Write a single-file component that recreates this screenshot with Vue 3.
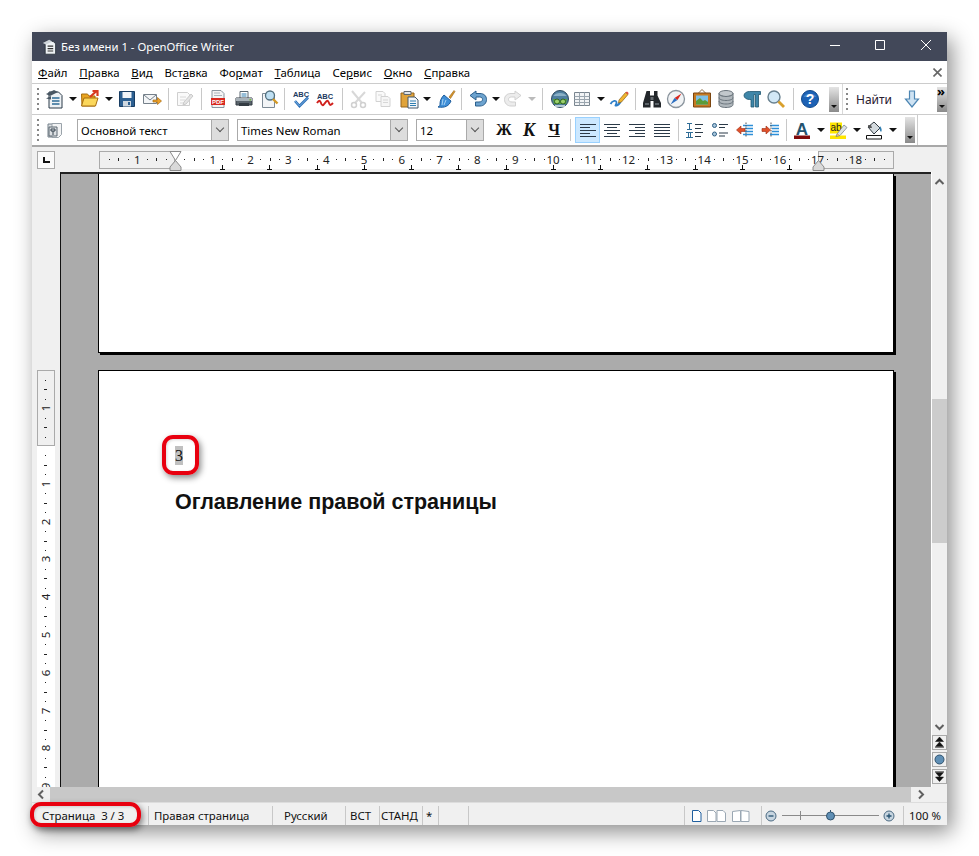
<script setup>
// toolbar items: [icon, left edge in window coordinates]
const icons = {
  doc: '<path d="M4 3h9.500l3.500 3.500V19H4z" fill="#eef2f5" stroke="#2b3a48"/><path d="M7 9h7.500M7 12h7.500M7 15h7.500" stroke="#2e6c96" stroke-width="1.500"/><path d="M1 5l8-4 4 2-8 4z" fill="#4a5763"/><path d="M1 9.500l5-2.500v3.500z" fill="#4a5763"/>',
  folder: '<path d="M1.500 5h6l1.500 2h6v10h-13z" fill="#e9a520" stroke="#a86f10"/><path d="M1.500 17l2.500-8h14l-2.500 8z" fill="#fbd75b" stroke="#a86f10"/><path d="M10 8l6-5.500M12.500 2h5v5" fill="none" stroke="#d8391f" stroke-width="2.200"/>',
  save: '<path d="M2.500 2.500h15v15h-15z" fill="#2c5f91" stroke="#183d63"/><path d="M5.500 3h9v6h-9z" fill="#f0f4f8"/><path d="M6 12h8v5.500H6z" fill="#cfd8e0"/><path d="M11 13h2v3h-2z" fill="#2c5f91"/>',
  mail: '<path d="M1.500 5.500h13v9h-13z" fill="#f3f5f7" stroke="#75808a"/><path d="M2 6l6 5 6-5" fill="none" stroke="#75808a"/><path d="M11 11h4.500V8.500l4 3.500-4 3.500V13H11z" fill="#eda12b" stroke="#a66a10" stroke-width=".7"/>',
  edit: '<path d="M3.500 3.500h10l2 2v11h-12z" fill="#fafafa" stroke="#cfcfcf"/><path d="M6 8h6M6 11h5M6 14h4" stroke="#d8d8d8"/><path d="M10 13l7-8 2 2-7 8-3 1z" fill="#e4e4e4" stroke="#cacaca"/>',
  pdf: '<path d="M4 1.500h9l3 3v14H4z" fill="#f4f4f4" stroke="#8a96a0"/><path d="M6 4h6M6 6.500h8" stroke="#aab3bb"/><path d="M3 9h14v7H3z" fill="#d8281f"/><text x="10" y="15" font-family="Liberation Sans" font-size="6" font-weight="700" fill="#fff" text-anchor="middle">PDF</text>',
  print: '<path d="M6 2.500h8v7H6z" fill="#fff" stroke="#5b6670"/><path d="M7.500 5h5M7.500 7h5" stroke="#2e7db0"/><path d="M2 9h16v7H2z" fill="#59636b" stroke="#333b42"/><path d="M2 9h16v3H2z" fill="#a9b2b9"/><path d="M5 14h10v3H5z" fill="#333b42"/><path d="M15.500 10h1.500v1.500h-1.500z" fill="#6fc030"/>',
  preview: '<path d="M3.500 4.500h9l3 3v11h-12z" fill="#f3f5f7" stroke="#7d8a95"/><circle cx="11" cy="6.500" r="4.500" fill="#bfe0f3" stroke="#53707f" stroke-width="1.300"/><path d="M14 10l4.500 4.500" stroke="#d49a26" stroke-width="2.400"/>',
  abc: '<text x="10" y="7.500" font-family="Liberation Sans" font-size="7.500" font-weight="700" fill="#1d3a5f" text-anchor="middle">ABC</text><path d="M4 12l4.500 5L17 8.500" fill="none" stroke="#2c6fb8" stroke-width="2.600"/><path d="M4 12l4.500 5L17 8.500" fill="none" stroke="#8cc0ea" stroke-width=".8"/>',
  abc2: '<text x="10" y="10" font-family="Liberation Sans" font-size="7.500" font-weight="700" fill="#1d3a5f" text-anchor="middle">ABC</text><path d="M2 14c2-3 3-3 4 0s2 3 4 0 3-3 4 0 2 2 4 0" fill="none" stroke="#d0201c" stroke-width="2"/>',
  cut: '<path d="M3 2l10 12M16 3L6 14" stroke="#d8d8d8" stroke-width="2"/><circle cx="5" cy="16" r="2.500" fill="none" stroke="#d0d0d0" stroke-width="1.500"/><circle cx="14" cy="16" r="2.500" fill="none" stroke="#d0d0d0" stroke-width="1.500"/>',
  copy: '<path d="M3 2.500h7l2 2v8H3z" fill="#fafafa" stroke="#d2d2d2"/><path d="M8 7.500h7l2 2v8H8z" fill="#f6f6f6" stroke="#d2d2d2"/><path d="M10 11h5M10 13.500h5M5 6h4" stroke="#d6d6d6"/>',
  paste: '<path d="M2 4h13v14H2z" fill="#e0a33a" stroke="#97641a"/><path d="M5 2.500h7v3H5z" fill="#dfe4e8" stroke="#5f6973"/><path d="M9 8h7l3 3v8H9z" fill="#f3f6f9" stroke="#44586b"/><path d="M11 12h6M11 14.500h6M11 16.500h6" stroke="#2e7db0"/>',
  brush: '<path d="M13 8l5-6.500 1 1-4.500 7z" fill="#d8962a" stroke="#95631a" stroke-width=".6"/><path d="M8 6l7 6c-2 5-6 7-13 6 2-1 2-2 2-3 0-3 1-6 4-9z" fill="#3f8fd8" stroke="#1e5c9b"/><path d="M7 10l-1 6M10 11l-2 5" stroke="#a8d2f2"/>',
  undo: '<path d="M8 2L2 6.500 8 11V8h3.500c2 0 3 1 3 2.500S13 13 11 13H7.500v4H12c4 0 6.500-3 6.500-6.500S16 4.500 12 4.500H8z" fill="#6da3cf" stroke="#2b5f8c"/>',
  redo: '<path d="M12 2l6 4.500L12 11V8H8.500c-2 0-3 1-3 2.500S7 13 9 13h3.500v4H8c-4 0-6.500-3-6.500-6.500S4 4.500 8 4.500h4z" fill="#ececec" stroke="#d0d0d0"/>',
  nav: '<circle cx="10" cy="10" r="8.500" fill="#4f7fa0" stroke="#2e4a5f"/><path d="M3.500 7c2-4 11-4 13 0z" fill="#8ab0c6"/><path d="M3 10h5l2 2 2-2h5l-1 5H4z" fill="#58a838"/><circle cx="7" cy="12.500" r="2.500" fill="#9ad06a" stroke="#2e5f25"/><circle cx="13" cy="12.500" r="2.500" fill="#9ad06a" stroke="#2e5f25"/><path d="M5 17h10" stroke="#d8e4ec" stroke-width="1.500"/>',
  table: '<path d="M2.500 3.500h15v13h-15z" fill="#f1f3f5" stroke="#78848e"/><path d="M2.500 7.500h15M2.500 10.500h15M2.500 13.500h15M7.500 3.500v13M12.500 3.500v13" stroke="#9aa5ae"/>',
  draw: '<path d="M1.500 15c2-4 6-4 6-1.500S5 17 7.500 16.500 12 12 12 12" fill="none" stroke="#2e7fc8" stroke-width="1.800"/><path d="M10 11l6.500-7.500 2.500 2L12.500 13 9.500 14z" fill="#f1b52f" stroke="#8a6220" stroke-width=".7"/><path d="M16.500 3.500l2.500 2 .6-1.500-1.600-1.600z" fill="#e0483a"/>',
  bino: '<path d="M4.500 2h3.500v4.500h4V2h3.500v4.500L19 14v4.500h-7.500v-6.500h-3v6.500H1V14z" fill="#23272b"/><path d="M3 15h4M13 15h4" stroke="#70787f" stroke-width="1.500"/><path d="M8.500 8h3v3h-3z" fill="#676d72"/>',
  compass: '<circle cx="10" cy="10" r="8.500" fill="#f1f3f5" stroke="#8a949d" stroke-width="1.300"/><path d="M15.500 4.500L11.500 11 8.500 9z" fill="#d8281f"/><path d="M4.500 15.500L8.500 9l3 2z" fill="#2d6fc0"/>',
  gallery: '<path d="M10 .5L6.500 4M10 .5L13.500 4" stroke="#8a6a42" fill="none"/><path d="M1.500 4h17v14h-17z" fill="#c77a22" stroke="#7a4510"/><path d="M4 6.500h12v9H4z" fill="#7dc0e6"/><path d="M4 12l4-3 3 3 2-1 3 2v2.500H4z" fill="#5b9c3a"/>',
  db: '<ellipse cx="10" cy="4.500" rx="7" ry="3" fill="#c2c8cc" stroke="#6b757d"/><path d="M3 4.500v11c0 1.800 3 3 7 3s7-1.200 7-3v-11c0 1.800-3 3-7 3s-7-1.200-7-3z" fill="#b0b7bc" stroke="#6b757d"/><path d="M3 8.500c0 1.800 3 3 7 3s7-1.200 7-3M3 12c0 1.800 3 3 7 3s7-1.200 7-3" fill="none" stroke="#6b757d"/>',
  pil: '<path d="M7.500 2.500h11v3h-2v12.500h-3V5.500h-1.500V18h-3v-7.500h-1.500c-3 0-5.500-1.700-5.500-4s2.500-4 5.500-4z" fill="#3f86a8" stroke="#1f5570" stroke-width=".8"/>',
  zoom: '<circle cx="8" cy="8" r="6" fill="#d2e8f6" stroke="#68808f" stroke-width="1.400"/><path d="M12.500 12.500l5.500 5.500" stroke="#d9a02c" stroke-width="2.800"/>',
  help: '<circle cx="10" cy="10" r="8.500" fill="#1d62b5" stroke="#124a8c"/><path d="M3.500 8a7 5 0 0 1 13 0" fill="#5b97d8" opacity=".6"/><text x="10" y="15" font-family="Liberation Sans" font-size="14" font-weight="700" fill="#fff" text-anchor="middle">?</text>',
  style: '<path d="M3 4h10v13H3z" fill="#dfe3e6" stroke="#75808a"/><path d="M7 3.500h9.500v11l-3 3H7z" fill="#f2f3f4" stroke="#9aa3aa"/><path d="M4 7h8v9H4z" fill="#dde0e3" stroke="#5a6670"/><path d="M6 9h4v2H6zM8 11v4" fill="none" stroke="#33404c"/>',
  left: '<path d="M2 4.500h16M2 7.500h10M2 10.500h16M2 13.500h10M2 16.500h16" stroke="#2b3a48" />',
  center: '<path d="M2 4.500h16M5 7.500h10M2 10.500h16M5 13.500h10M2 16.500h16" stroke="#2b3a48"/>',
  right: '<path d="M2 4.500h16M8 7.500h10M2 10.500h16M8 13.500h10M2 16.500h16" stroke="#2b3a48"/>',
  just: '<path d="M2 4.500h16M2 7.500h16M2 10.500h16M2 13.500h16M2 16.500h16" stroke="#2b3a48"/>',
  nums: '<path d="M3 3.500h5M5.500 3.500v6M3 9.500h5M2 12.500h7M4.500 12.500v5M6.500 12.500v5M2 17.500h7" stroke="#2e6c96"/><path d="M11 4.500h8M11 8.500h6M11 12.500h8M11 16.500h6" stroke="#2b3a48" stroke-width="1.200"/>',
  bullets: '<circle cx="4.500" cy="5.500" r="2" fill="#a8c6dc" stroke="#2e5f85"/><circle cx="4.500" cy="14" r="2" fill="#a8c6dc" stroke="#2e5f85"/><path d="M9 4.500h9M9 7.500h6M9 13h9M9 16h6" stroke="#2b3a48" stroke-width="1.200"/>',
  outdent: '<path d="M8 5.500h10M10 8.500h8M10 11.500h8M8 14.500h10" stroke="#2e8fd8" stroke-width="1.400"/><path d="M11 2.500v15" stroke="#555" stroke-dasharray="1.500 1"/><path d="M1.500 10L6 6v2.500h4v3H6V14z" fill="#e0502a" stroke="#9a2a10" stroke-width=".6"/>',
  indent: '<path d="M10 5.500h9M10 14.500h9M12 8.500h7M12 11.500h7" stroke="#2e8fd8" stroke-width="1.400"/><path d="M11 2.500v15" stroke="#555" stroke-dasharray="1.500 1"/><path d="M10.500 10L6 6v2.500H2v3h4V14z" fill="#e0502a" stroke="#9a2a10" stroke-width=".6"/>',
  fontcolor: '<text x="10" y="14.500" font-family="Liberation Sans" font-size="17" font-weight="700" fill="#24536f" text-anchor="middle">A</text><path d="M2 15.500h16v3.500H2z" fill="#7f0a0a"/>',
  mark: '<path d="M2 2.500h12v11H2zM2 15.500h16v3.500H2z" fill="#ffe600"/><text x="2.500" y="11" font-family="Liberation Sans" font-size="10" fill="#222">ab</text><path d="M9 14l7-9 3 2.500-7 8-4 1z" fill="#dde2e6" stroke="#6b757d" stroke-width=".7"/><path d="M8 15l2.500-1 .5 1.500z" fill="#e89a2a"/>',
  bucket: '<path d="M4 7l6-5 6 6-6 6z" fill="#d4dade" stroke="#333b42"/><path d="M4 5h3l1 3H5z" fill="#555"/><path d="M16 6c2 2 2 5 1 6-1-1-2-3-1-6z" fill="#2e7db0"/><path d="M2.500 15.500h15v3.500h-15z" fill="#fff" stroke="#111"/>',
  down: '<path d="M7.500 2h5v8h4l-6.500 8-6.500-8h4z" fill="#cfe3f3" stroke="#4d86b3" stroke-width="1.200"/>'
}
const toolsA = [
  ['doc', 46], ['arrow', 70], ['folder', 81], ['arrow', 106], ['save', 118], ['mail', 143], ['sep', 169], ['edit', 175],
  ['sep', 202], ['pdf', 209], ['print', 235], ['preview', 260], ['sep', 285], ['abc', 292], ['abc2', 316], ['sep', 343],
  ['cut', 350], ['copy', 374], ['paste', 400], ['arrow', 424], ['brush', 437], ['sep', 462], ['undo', 469], ['arrow', 493],
  ['redo', 504], ['arrow-off', 529], ['sep', 543], ['nav', 551], ['table', 573], ['arrow', 598], ['draw', 610], ['sep', 636],
  ['bino', 643], ['compass', 667], ['gallery', 693], ['db', 717], ['pil', 743], ['zoom', 767], ['sep', 794], ['help', 801], ['end', 830]
]
const toolsB = [
  ['bold', 494], ['italic', 519], ['under', 544], ['sep', 570], ['left', 578], ['center', 602], ['right', 627], ['just', 652],
  ['sep', 678], ['nums', 684], ['bullets', 710], ['outdent', 735], ['indent', 760], ['sep', 786], ['fontcolor', 792], ['arrow', 817],
  ['mark', 828], ['arrow', 853], ['bucket', 864], ['arrow', 889], ['end', 905]
]
const withWidth = (list, stop) => list.map(([name, x], i) => ({
  name,
  w: (i + 1 < list.length ? list[i + 1][1] : stop) - x
}))
const rowA = withWidth(toolsA, 843)
const rowB = withWidth(toolsB, 917)

const menu = [
  ['', 'Ф', 'айл'], ['', 'П', 'равка'], ['', 'В', 'ид'], ['Вст', 'а', 'вка'], ['Фо', 'р', 'мат'],
  ['', 'Т', 'аблица'], ['Се', 'р', 'вис'], ['', 'О', 'кно'], ['', 'С', 'правка']
]

// rulers: one centimetre is 37.8px
const cm = 37.8
const hOrigin = 76
const hNums = []
const hMarks = []
for (let q = -7; q < 76; q++) {
  const x = hOrigin + (q * cm) / 4
  if (q === 0) continue
  if (q % 4 === 0) hNums.push({ x, n: Math.abs(q / 4) })
  else hMarks.push({ x, half: Math.abs(q % 4) === 2 })
}
const tabs = Array.from({ length: 13 }, (_, i) => 123 + i * 47.25)

const vOrigin = 274
const vNums = []
const vMarks = []
for (let q = -7; q < 40; q++) {
  const y = vOrigin + (q * cm) / 4
  if (q === 0) continue
  if (q % 4 === 0) vNums.push({ y, n: Math.abs(q / 4) })
  else vMarks.push({ y, half: Math.abs(q % 4) === 2 })
}
</script>

<template>
  <div class="screen">
    <div class="window">
      <div class="titlebar">
        <svg class="app-icon" width="16" height="16" viewBox="0 0 20 20">
          <path d="M4 3h10l3 3v13H4z" fill="#eef2f5" stroke="#222b33" />
          <path d="M7 9h7M7 12h7M7 15h7" stroke="#333" stroke-width="1.500" />
          <path d="M1 5l8-4 4 2-8 4z" fill="#cfd5da" />
        </svg>
        <span class="title">Без имени 1 - OpenOffice Writer</span>
        <svg class="win-btns" width="110" height="29" viewBox="0 0 110 29">
          <path d="M0 13.500h10" stroke="#fff" />
          <path d="M45.500 8.500h9v9h-9z" fill="none" stroke="#fff" />
          <path d="M91 8l10 10M101 8L91 18" stroke="#fff" />
        </svg>
      </div>

      <div class="menubar">
        <span v-for="m in menu" :key="m[1] + m[2]" class="menu-item">{{ m[0] }}<u>{{ m[1] }}</u>{{ m[2] }}</span>
        <svg class="doc-close" width="9" height="9" viewBox="0 0 9 9">
          <path d="M.5.500l8 8M8.500.500l-8 8" stroke="#666" stroke-width="1.600" />
        </svg>
      </div>

      <div class="toolbar">
        <span class="grip"></span>
        <span class="spacer-a"></span>
        <span v-for="(t, i) in rowA" :key="i" class="tool" :style="{ width: t.w + 'px' }">
          <span v-if="t.name === 'sep'" class="sep"></span>
          <span v-else-if="t.name === 'arrow'" class="arrow"></span>
          <span v-else-if="t.name === 'arrow-off'" class="arrow off"></span>
          <span v-else-if="t.name === 'end'" class="overflow"></span>
          <svg v-else width="20" height="20" viewBox="0 0 20 20" v-html="icons[t.name]"></svg>
        </span>
        <span class="find">
          <span class="grip find-grip"></span>
          <span class="find-label">Найти</span>
          <svg width="20" height="20" viewBox="0 0 20 20" v-html="icons.down"></svg>
          <span class="overflow more"><b>»</b></span>
        </span>
      </div>

      <div class="toolbar format">
        <span class="grip"></span>
        <svg class="style-icon" width="20" height="20" viewBox="0 0 20 20" v-html="icons.style"></svg>
        <span class="combo combo-style"><span>Основной текст</span><i></i></span>
        <span class="combo combo-font"><span>Times New Roman</span><i></i></span>
        <span class="combo combo-size"><span>12</span><i></i></span>
        <span class="format-tools">
          <span v-for="(t, i) in rowB" :key="i" class="tool" :style="{ width: t.w + 'px' }">
            <span v-if="t.name === 'sep'" class="sep"></span>
            <span v-else-if="t.name === 'arrow'" class="arrow"></span>
            <span v-else-if="t.name === 'end'" class="overflow tall"></span>
            <b v-else-if="t.name === 'bold'" class="letter">Ж</b>
            <b v-else-if="t.name === 'italic'" class="letter ital">К</b>
            <b v-else-if="t.name === 'under'" class="letter undl">Ч</b>
            <span v-else-if="t.name === 'left'" class="active">
              <svg width="20" height="20" viewBox="0 0 20 20" v-html="icons.left"></svg>
            </span>
            <svg v-else width="20" height="20" viewBox="0 0 20 20" v-html="icons[t.name]"></svg>
          </span>
        </span>
      </div>

      <div class="ruler-row">
        <span class="corner"><i></i></span>
        <div class="hruler">
          <span class="margin-l"></span>
          <span class="margin-r"></span>
          <span v-for="m in hMarks" :key="m.x" class="hmark" :class="{ half: m.half }" :style="{ left: m.x + 'px' }"></span>
          <span v-for="m in hNums" :key="m.x" class="hnum" :style="{ left: m.x + 'px' }">{{ m.n }}</span>
          <span v-for="x in tabs" :key="x" class="tab" :style="{ left: x + 'px' }"></span>
          <svg class="marker marker-l" width="13" height="20" viewBox="0 0 13 20">
            <path d="M1 .5h11L6.500 9.500z" fill="#fff" stroke="#8a8a8a" />
            <path d="M6.500 9.500L12 16v3.500H1V16z" fill="#d9d9d9" stroke="#8a8a8a" />
          </svg>
          <svg class="marker marker-r" width="13" height="20" viewBox="0 0 13 20">
            <path d="M6.500 9.500L12 16v3.500H1V16z" fill="#d9d9d9" stroke="#8a8a8a" />
          </svg>
        </div>
      </div>

      <div class="workspace">
        <div class="left-col">
          <div class="vruler">
            <span class="margin-t"></span>
            <span class="vstrip"></span>
            <span v-for="m in vMarks" :key="m.y" class="vmark" :class="{ half: m.half }" :style="{ top: m.y + 'px' }"></span>
            <span v-for="m in vNums" :key="m.y" class="vnum" :style="{ top: m.y + 'px' }">{{ m.n }}</span>
          </div>
          <div class="doc">
            <div class="page page-top"></div>
            <div class="page page-main">
              <span class="field">3</span>
              <h1>Оглавление правой страницы</h1>
            </div>
          </div>
        </div>
        <div class="vscroll">
          <svg class="sb-arrow" width="15" height="19" viewBox="0 0 15 19"><path d="M3.500 12l4-4 4 4" fill="none" stroke="#606060" stroke-width="2" /></svg>
          <div class="vtrack"><span class="vthumb"></span></div>
          <svg class="sb-arrow" width="15" height="15" viewBox="0 0 15 15"><path d="M3.500 5l4 4 4-4" fill="none" stroke="#606060" stroke-width="2" /></svg>
          <span class="nav-btn">
            <svg width="11" height="11" viewBox="0 0 11 11"><path d="M5.500 0l4 4.500h-8zM5.500 5l4 4.500h-8zM1 10.500h9" fill="#111" stroke="#111" stroke-width=".5" /></svg>
          </span>
          <span class="nav-btn">
            <svg width="11" height="11" viewBox="0 0 11 11"><circle cx="5.500" cy="5.500" r="4.500" fill="#5f8fb5" stroke="#30526e" /></svg>
          </span>
          <span class="nav-btn">
            <svg width="11" height="11" viewBox="0 0 11 11"><path d="M1 .5h9M1.500 1.500h8L5.500 6zM1.500 6h8l-4 4.500z" fill="#111" stroke="#111" stroke-width=".5" /></svg>
          </span>
        </div>
      </div>

      <div class="hscroll">
        <svg width="17" height="15" viewBox="0 0 17 15"><path d="M10 3.500l-4 4 4 4" fill="none" stroke="#606060" stroke-width="2" /></svg>
        <span class="htrack"></span>
        <svg width="20" height="15" viewBox="0 0 20 15"><path d="M8 3.500l4 4-4 4" fill="none" stroke="#606060" stroke-width="2" /></svg>
      </div>

      <div class="statusbar">
        <span class="cell cell-page">Страница &nbsp;3 / 3</span>
        <span class="cell cell-style">Правая страница</span>
        <span class="cell cell-lang">Русский</span>
        <span class="cell cell-ins">ВСТ</span>
        <span class="cell cell-std">СТАНД</span>
        <span class="cell cell-star">*</span>
        <span class="cell cell-e1"></span>
        <span class="cell cell-e2"></span>
        <span class="cell cell-views">
          <svg width="60" height="14" viewBox="0 0 60 14">
            <path d="M.5 1.500h6l2.500 2.500v8.500H.5z" fill="#fff" stroke="#1f5f9f" />
            <path d="M15.500 1.500h6l2.500 2.500v8.500h-8.500zM25 1.500h6l2.500 2.500v8.500H25z" fill="#fff" stroke="#9aa7b3" />
            <path d="M40.500 2.500l8-1v11h-8zM49 1.500l8 1v10h-8z" fill="#fff" stroke="#9aa7b3" />
          </svg>
        </span>
        <span class="cell cell-zoom">
          <svg width="138" height="14" viewBox="0 0 138 14">
            <circle cx="9" cy="7" r="5" fill="#c7d5e0" stroke="#4b6a82" />
            <path d="M6.500 7h5" stroke="#24506f" stroke-width="1.300" />
            <path d="M20 6.500h97" stroke="#8a8a8a" />
            <path d="M38.500 2v9" stroke="#8a8a8a" />
            <circle cx="68.500" cy="7" r="4" fill="#5f8fb5" stroke="#30526e" />
            <path d="M68.500 1v2" stroke="#30526e" />
            <circle cx="127" cy="7" r="5" fill="#c7d5e0" stroke="#4b6a82" />
            <path d="M124.500 7h5M127 4.500v5" stroke="#24506f" stroke-width="1.300" />
          </svg>
        </span>
        <span class="cell-percent">100 %</span>
      </div>
    </div>

    <span class="callout callout-field"></span>
    <span class="callout callout-status"></span>
  </div>
</template>

<style>
html, body {
  margin: 0;
  background: #fff;
}
</style>

<style scoped>
.screen {
  position: relative;
  width: 979px;
  height: 856px;
  padding: 32px 0 0 32px;
  box-sizing: border-box;
  overflow: hidden;
  background: #fff;
  font-family: "Noto Sans", "Open Sans", sans-serif;
  font-size: 11.400px;
  color: #000;
}
.window {
  display: flex;
  flex-direction: column;
  width: 915px;
  height: 793px;
  background: #f0f0f0;
  box-shadow: 5px 7px 20px rgba(0, 0, 0, 0.45);
}
.titlebar {
  display: flex;
  align-items: center;
  flex: none;
  height: 29px;
  padding-left: 10px;
  background: #424859;
  color: #fff;
}
.app-icon {
  margin-right: 3px;
}
.title {
  flex: 1;
  font-size: 11.300px;
}
.win-btns {
  margin-right: 7px;
}
.menubar {
  display: flex;
  align-items: center;
  flex: none;
  height: 22px;
  padding-left: 0.200px;
  background: #fff;
  border-bottom: 1px solid #ccc;
}
.menu-item {
  padding: 0 5.900px;
  white-space: nowrap;
}
.doc-close {
  margin-left: auto;
  margin-right: 5px;
}
.toolbar {
  display: flex;
  align-items: center;
  flex: none;
  height: 30px;
  background: #fff;
  border-bottom: 1px solid #ccc;
}
.toolbar.format {
  height: 30px;
  border-bottom: 2px solid #a8a8a8;
}
.grip {
  flex: none;
  width: 2px;
  height: 22px;
  margin-left: 5px;
  background: repeating-linear-gradient(to bottom, #888 0 2px, transparent 2px 5px);
}
.spacer-a {
  flex: none;
  width: 6px;
}
.tool {
  display: flex;
  align-items: center;
  flex: none;
  height: 30px;
}
.sep {
  display: block;
  width: 1px;
  height: 22px;
  background: #c8c8c8;
}
.arrow {
  display: block;
  width: 0;
  height: 0;
  margin-left: 0;
  border: 4px solid transparent;
  border-top-color: #111;
  border-bottom: 0;
}
.arrow.off {
  border-top-color: #bbb;
}
.overflow {
  position: relative;
  display: block;
  width: 10px;
  height: 25px;
  background: linear-gradient(#e4e4e4, #8a8a8a);
}
.overflow::after {
  content: "";
  position: absolute;
  left: 2px;
  bottom: 4px;
  border: 3px solid transparent;
  border-top-color: #111;
  border-bottom: 0;
}
.overflow.tall {
  height: 26px;
}
.find {
  display: flex;
  align-items: center;
  flex: 1;
  height: 30px;
  border-left: 1px solid #d8d8d8;
}
.find-grip {
  margin-left: 3px;
}
.find-label {
  margin: 0 10px 0 8px;
  font-size: 12px;
  color: #2a2030;
}
.more {
  margin-left: auto;
  margin-right: 0;
}
.more b {
  position: absolute;
  top: -2px;
  left: 0;
  font-size: 13px;
  line-height: 12px;
}
.style-icon {
  flex: none;
  margin: 0 12px 0 6px;
}
.combo {
  display: flex;
  align-items: center;
  justify-content: space-between;
  flex: none;
  box-sizing: border-box;
  height: 22px;
  padding-left: 3px;
  background: #fff;
  border: 1px solid #aaa;
}
.combo i {
  position: relative;
  display: block;
  width: 17px;
  height: 20px;
  box-sizing: border-box;
  background: #ddd;
  border: 1px solid #aaa;
  border-width: 0 0 0 1px;
}
.combo i::after {
  content: "";
  position: absolute;
  left: 5px;
  top: 5px;
  width: 5px;
  height: 5px;
  border: solid #555;
  border-width: 0 1px 1px 0;
  transform: rotate(45deg);
}
.combo-style {
  width: 152px;
  margin-right: 8px;
}
.combo-font {
  width: 171px;
  margin-right: 8px;
}
.combo-size {
  width: 68px;
}
.format-tools {
  display: flex;
  box-sizing: content-box;
  margin-left: 10px;
  border-right: 1px solid #ccc;
}
.letter {
  display: block;
  font-family: "Liberation Serif", serif;
  font-size: 16px;
  line-height: 20px;
  color: #111;
  width: 20px;
  text-align: center;
}
.letter.ital {
  font-style: italic;
  font-size: 18px;
}
.letter.undl {
  text-decoration: underline;
}
.active {
  display: flex;
  align-items: center;
  justify-content: center;
  box-sizing: border-box;
  width: 25px;
  height: 26px;
  margin-left: -3px;
  background: #cce8ff;
  border: 1px solid #99d1ff;
}
.ruler-row {
  display: flex;
  align-items: center;
  flex: none;
  height: 25px;
  background: #f0f0f0;
}
.corner {
  position: relative;
  flex: none;
  box-sizing: border-box;
  width: 18px;
  height: 18px;
  margin: 0 44px 0 5px;
  background: #fafafa;
  border: 1px solid #aaa;
}
.corner i {
  position: absolute;
  left: 5px;
  top: 5px;
  width: 5px;
  height: 4px;
  border: solid #111;
  border-width: 0 0 2px 2px;
}
.hruler {
  position: relative;
  width: 795px;
  height: 18px;
  background: #fff;
}
.margin-l,
.margin-r {
  position: absolute;
  top: 0;
  box-sizing: border-box;
  height: 18px;
  background: #f0f0f0;
  border: 1px solid #aaa;
}
.margin-l {
  left: 0;
  width: 76px;
}
.margin-r {
  right: 0;
  width: 76px;
}
.hmark {
  position: absolute;
  top: 8px;
  width: 1px;
  height: 1px;
  background: #222;
}
.hmark.half {
  top: 7px;
  height: 3px;
}
.hnum {
  position: absolute;
  top: 0;
  font-size: 11.500px;
  line-height: 18px;
  color: #222;
  transform: translateX(-50%);
}
.tab {
  position: absolute;
  top: 14px;
  width: 1px;
  height: 5px;
  background: #111;
}
.tab::after {
  content: "";
  position: absolute;
  left: -2px;
  bottom: 0;
  width: 5px;
  height: 1px;
  background: #111;
}
.marker {
  position: absolute;
  top: 0;
}
.marker-l {
  left: 70px;
}
.marker-r {
  left: 713px;
}
.workspace {
  display: flex;
  flex: 1;
  min-height: 0;
}
.left-col {
  display: flex;
  flex: 1;
  min-width: 0;
}
.vruler {
  position: relative;
  flex: none;
  width: 28px;
  overflow: hidden;
}
.margin-t {
  position: absolute;
  left: 5px;
  top: 198px;
  box-sizing: border-box;
  width: 18px;
  height: 76px;
  background: #f0f0f0;
  border: 1px solid #aaa;
}
.vstrip {
  position: absolute;
  left: 5px;
  top: 274px;
  bottom: 0;
  width: 18px;
  background: #fff;
}
.vmark {
  position: absolute;
  left: 13px;
  width: 1px;
  height: 1px;
  background: #222;
}
.vmark.half {
  left: 12px;
  width: 3px;
}
.vnum {
  position: absolute;
  left: 5px;
  width: 18px;
  font-size: 11.500px;
  line-height: 18px;
  margin-top: -9px;
  text-align: center;
  color: #222;
  transform: rotate(-90deg);
}
.doc {
  flex: 1;
  min-width: 0;
  box-sizing: border-box;
  padding: 0 0 0 37px;
  overflow: hidden;
  background: #ababab;
  border-left: 1px solid #111;
  border-top: 2px solid #222;
}
.page {
  box-sizing: border-box;
  width: 796px;
  background: #fff;
  border: 1px solid #000;
  box-shadow: 2px 2px 0 #000;
}
.page-top {
  height: 179px;
  border-top: 0;
  margin-bottom: 17px;
}
.page-main {
  position: relative;
  height: 600px;
  padding: 75px 0 0 76px;
}
.field {
  display: block;
  width: 8px;
  height: 19px;
  background: #c0c0c0;
  font-family: "Liberation Serif", serif;
  font-size: 16px;
  line-height: 19px;
  text-align: center;
  color: #111;
}
h1 {
  margin: 25px 0 0;
  font-family: "Liberation Sans", Arial, sans-serif;
  font-size: 21.500px;
  line-height: 24px;
  font-weight: 700;
  color: #111;
}
.vscroll {
  display: flex;
  flex-direction: column;
  flex: none;
  align-items: center;
  width: 16px;
  padding-bottom: 1px;
  box-sizing: border-box;
  background: #f0f0f0;
  border-left: 1px solid #fff;
}
.sb-arrow {
  flex: none;
}
.vtrack {
  flex: 1;
  width: 15px;
  padding-top: 208px;
  box-sizing: border-box;
}
.vthumb {
  display: block;
  height: 144px;
  background: #ccc;
}
.nav-btn {
  display: flex;
  align-items: center;
  justify-content: center;
  flex: none;
  box-sizing: border-box;
  width: 15px;
  height: 15px;
  margin-bottom: 2px;
  border: 1px solid #aaa;
}
.hscroll {
  display: flex;
  align-items: center;
  flex: none;
  height: 15px;
  margin-right: 16px;
  padding-left: 1px;
  background: #f0f0f0;
}
.htrack {
  flex: 1;
  height: 15px;
  background: #c8c8c8;
}
.statusbar {
  display: flex;
  align-items: center;
  flex: none;
  height: 23px;
  padding-top: 3px;
  box-sizing: border-box;
  background: #f0f0f0;
  border-top: 1px solid #ddd;
  color: #111;
}
.cell {
  display: flex;
  align-items: center;
  flex: none;
  box-sizing: border-box;
  height: 19px;
  border-right: 1px solid #c8c8c8;
  white-space: nowrap;
}
.cell-page { width: 117px; padding-left: 10px; }
.cell-style { width: 124px; padding-left: 5px; }
.cell-lang { width: 73px; padding-left: 11px; }
.cell-ins { width: 34px; padding-left: 4px; }
.cell-std { width: 43px; padding-left: 1px; }
.cell-star { width: 16px; padding-left: 3px; }
.cell-e1 { width: 30px; }
.cell-e2 { width: 216px; }
.cell-views { width: 77px; padding-left: 7px; }
.cell-zoom { width: 142px; padding-left: 0; }
.cell-percent { padding-left: 5px; }
.callout {
  position: absolute;
  box-sizing: border-box;
  border: 4px solid #e8000f;
  border-radius: 11px;
  box-shadow: 2px 3px 6px rgba(0, 0, 0, 0.45), inset 1px 1px 3px rgba(0, 0, 0, 0.15);
}
.callout-field {
  left: 162px;
  top: 435px;
  width: 37px;
  height: 40px;
}
.callout-status {
  left: 30px;
  top: 802px;
  width: 111px;
  height: 25px;
}
</style>
